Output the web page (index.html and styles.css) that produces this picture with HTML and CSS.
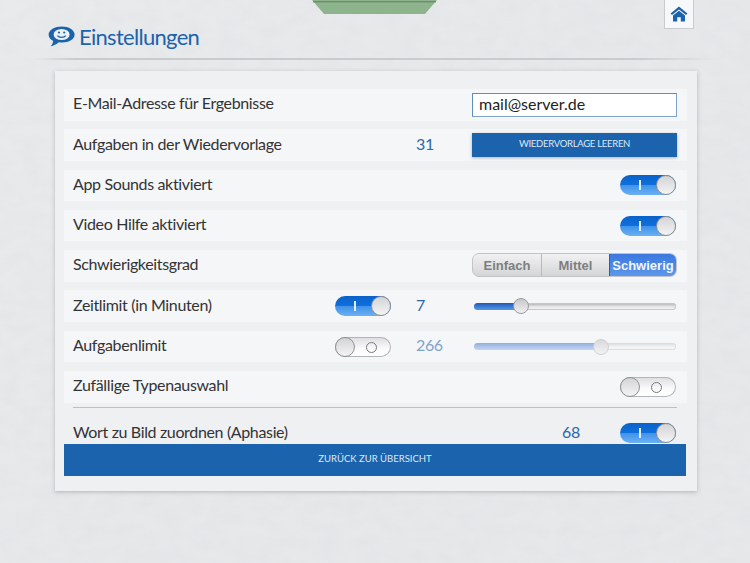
FILE: index.html
```html
<!DOCTYPE html>
<html lang="de">
<head>
<meta charset="utf-8">
<title>Einstellungen</title>
<link rel="stylesheet" href="styles.css">
</head>
<body>
<div class="page">
  <svg class="texture" width="750" height="563" aria-hidden="true">
    <filter id="paper"><feTurbulence type="fractalNoise" baseFrequency="0.05 0.08" numOctaves="3" seed="4"/><feColorMatrix type="matrix" values="0 0 0 0 0.6  0 0 0 0 0.62  0 0 0 0 0.65  0 0 0 0.22 -0.07"/></filter>
    <rect width="750" height="563" filter="url(#paper)"/>
  </svg>
  <svg class="tab" width="128" height="15" viewBox="0 0 128 15"><polygon points="1,0 126,0 114,14 13,14" fill="#8db48d"/><rect x="2" y="1" width="123" height="1.4" fill="#6f8c72"/></svg>
  <a class="home">
    <svg width="18" height="16" viewBox="0 0 18 16"><path d="M9 0.5 L0.6 7.4 L2 9 L9 3.4 L16 9 L17.4 7.4 Z" fill="#1b63ad"/><path d="M9 4.8 L3 9.6 V15.6 H7.2 V11.2 H10.8 V15.6 H15 V9.6 Z" fill="#1b63ad"/></svg>
  </a>
  <header class="header">
    <svg class="logo" width="27" height="21" viewBox="0 0 27 21">
      <path d="M13.8 0.4 C20.8 0.4 26.6 3.8 26.6 8.6 C26.6 13.4 20.8 16.6 14.4 16.6 C13.2 16.6 12 16.5 10.8 16.2 C8.6 18.2 5.6 19.8 2.6 20.2 C4.2 18.6 5 16.8 5.2 15 C2.4 13.6 0.6 11.3 0.6 8.6 C0.6 3.8 6.8 0.4 13.8 0.4 Z" fill="#1b63ad"/>
      <ellipse cx="13.6" cy="8.5" rx="8" ry="5.5" fill="#eaf1f8"/>
      <circle cx="11" cy="6.5" r="1.1" fill="#1b63ad"/><circle cx="16.2" cy="6.5" r="1.1" fill="#1b63ad"/>
      <path d="M9.4 9.6 C11 11.9 16.2 11.9 17.8 9.6" fill="none" stroke="#1b63ad" stroke-width="1.1"/>
    </svg>
    <h1 class="title">Einstellungen</h1>
  </header>
  <main class="card">
    <div class="scroller">
      <div class="row">
        <span class="label">E-Mail-Adresse für Ergebnisse</span>
        <input class="email" type="text" value="mail@server.de">
      </div>
      <div class="row">
        <span class="label">Aufgaben in der Wiedervorlage</span>
        <span class="value">31</span>
        <button class="clear">WIEDERVORLAGE LEEREN</button>
      </div>
      <div class="row">
        <span class="label">App Sounds aktiviert</span>
        <span class="toggle on end"><i class="mark"></i><i class="knob"></i></span>
      </div>
      <div class="row">
        <span class="label">Video Hilfe aktiviert</span>
        <span class="toggle on end"><i class="mark"></i><i class="knob"></i></span>
      </div>
      <div class="row">
        <span class="label">Schwierigkeitsgrad</span>
        <div class="segments">
          <span class="seg first">Einfach</span>
          <span class="seg">Mittel</span>
          <span class="seg active">Schwierig</span>
        </div>
      </div>
      <div class="row">
        <span class="label">Zeitlimit (in Minuten)</span>
        <span class="toggle on mid"><i class="mark"></i><i class="knob"></i></span>
        <span class="value">7</span>
        <div class="slider"><div class="fill fill-time"></div><i class="thumb"></i><div class="rest"></div></div>
      </div>
      <div class="row">
        <span class="label">Aufgabenlimit</span>
        <span class="toggle off mid"><i class="knob"></i><i class="ring"></i></span>
        <span class="value dim">266</span>
        <div class="slider dim-slider"><div class="fill fill-tasks"></div><i class="thumb"></i><div class="rest"></div></div>
      </div>
      <div class="row">
        <span class="label">Zufällige Typenauswahl</span>
        <span class="toggle off end"><i class="knob"></i><i class="ring"></i></span>
      </div>
      <hr class="divider">
      <div class="type-row">
        <span class="label grow">Wort zu Bild zuordnen (Aphasie)</span>
        <span class="type-value">68</span>
        <span class="toggle on"><i class="mark"></i><i class="knob"></i></span>
      </div>
    </div>
    <button class="back">ZURÜCK ZUR ÜBERSICHT</button>
  </main>
</div>
</body>
</html>
```
FILE: styles.css
```css
* { box-sizing: border-box; }
html, body { margin: 0; padding: 0; }
body { font-family: "Lato", "Liberation Sans", sans-serif; color: #333335; }
.page {
  position: relative;
  width: 750px;
  height: 563px;
  overflow: hidden;
  background: linear-gradient(135deg, #e9eaec 0%, #e6e8ea 50%, #e6e8ea 100%);
}
.texture { position: absolute; left: 0; top: 0; pointer-events: none; }
.tab { position: absolute; left: 311px; top: 0; }
.home {
  position: absolute;
  left: 664px;
  top: -1px;
  width: 30px;
  height: 30px;
  display: flex;
  align-items: center;
  justify-content: center;
  padding-top: 1px;
  background: #f7f8fa;
  border: 1px solid #c9cbce;
  border-top: 0;
}
.header {
  position: relative;
  height: 60px;
  margin: 0 35px -1px;
  padding: 26px 0 0 13px;
  display: flex;
  align-items: flex-start;
  gap: 4px;
  border-bottom: 2px solid transparent;
  border-image: linear-gradient(90deg, rgba(190,192,196,0), #c9cbce 6%, #c9cbce 88%, rgba(190,192,196,0)) 1;
}
.logo { display: block; }
.title {
  margin: -4px 0 0;
  font-size: 22px;
  line-height: 30px;
  font-weight: 400;
  letter-spacing: -0.7px;
  color: #1b63ad;
}
.card {
  position: relative;
  width: 642px;
  height: 420px;
  margin: 12px 0 0 55px;
  padding: 18px 10px 15px 9px;
  background: #eff0f2;
  box-shadow: 0 1px 4px rgba(120, 122, 126, .45);
}
.scroller { height: 355px; overflow: hidden; }
.row {
  height: 31.5px;
  margin-bottom: 8.8px;
  padding: 0 10px 0 9px;
  display: grid;
  grid-template-columns: 262px 81px 56px 205px;
  align-items: center;
  background: #f5f6f8;
}
.row > .label { grid-column: 1; }
.label { font-size: 16px; letter-spacing: -0.35px; white-space: nowrap; padding-bottom: 4px; }
.row > .value { grid-column: 3; }
.row > .email, .row > .clear, .row > .segments, .row > .slider, .row > .end { grid-column: 4; }
.row > .mid { grid-column: 2; }
.end { justify-self: end; margin-right: 1px; }
.value, .type-value { font-size: 16px; letter-spacing: -0.4px; color: #2a68a8; padding-bottom: 4px; }
.value.dim { color: #7fa3cc; }
.email {
  width: 205px;
  height: 24px;
  padding: 0 6px 3px;
  border: 1px solid #7fa3cc;
  border-top-color: #5f8dbf;
  border-left-color: #5f8dbf;
  background: #fff;
  font: 16px "Lato", "Liberation Sans", sans-serif;
  color: #222;
  outline: 0;
}
.clear {
  width: 205px;
  height: 24px;
  padding: 0 0 3px;
  border: 0;
  background: #1b63ad;
  color: #dfe9f4;
  font: 9.5px "Lato", "Liberation Sans", sans-serif;
  letter-spacing: -0.28px;
  box-shadow: 0 1px 3px rgba(60, 80, 110, .4);
}
.toggle {
  position: relative;
  display: block;
  width: 56px;
  height: 20px;
  border-radius: 10px;
  flex: none;
}
.toggle.on { background: linear-gradient(#0a62c8 0%, #0f6fdc 48%, #3f93ea 52%, #6cb0f2 100%); }
.toggle.off { background: linear-gradient(#dcdde0, #fbfbfc 60%, #fff); box-shadow: inset 0 0 0 1px #b4b5b8; }
.knob {
  position: absolute;
  top: 0;
  width: 20px;
  height: 20px;
  border-radius: 50%;
  border: 1px solid #8f9193;
  background: linear-gradient(#d4d4d6, #f4f4f5);
}
.on .knob { right: 0; }
.off .knob { left: 0; }
.mark { position: absolute; left: 19px; top: 5px; width: 2px; height: 10px; background: #e4effb; }
.ring { position: absolute; left: 31px; top: 5px; width: 11px; height: 11px; border-radius: 50%; border: 1.5px solid #77787a; }
.segments {
  display: flex;
  width: 205px;
  height: 24px;
  margin-top: -1px;
  border: 1px solid #c3c4c7;
  border-radius: 7px;
  overflow: hidden;
  background: linear-gradient(#f1f1f2, #d4d5d7);
}
.seg {
  flex: 0 0 68px;
  display: flex;
  align-items: center;
  justify-content: center;
  border-left: 1px solid #b8b9bc;
  font: bold 13px "Liberation Sans", sans-serif;
  color: #7d7e80;
}
.seg.first { border-left: 0; }
.seg.active {
  flex: 1;
  border-left-color: #2b5fa8;
  background: linear-gradient(#3c78de, #5c97ec);
  color: #f2f6fd;
}
.slider {
  position: relative;
  width: 202px;
  height: 7px;
  margin-left: 2px;
  display: flex;
  align-items: stretch;
}
.fill { border-radius: 4px 0 0 4px; background: linear-gradient(#2258ad, #3c7fd8 55%, #5a96e0); }
.fill-time { width: 47px; }
.fill-tasks { width: 127px; }
.rest { flex: 1; border-radius: 0 4px 4px 0; background: linear-gradient(#a9aaac, #e4e4e6 50%, #f8f8f9); box-shadow: inset 0 0 0 1px #c6c7c9; }
.thumb {
  align-self: center;
  flex: none;
  width: 16px;
  height: 16px;
  margin: 0 -8px;
  z-index: 1;
  border-radius: 50%;
  border: 1px solid #9a9b9d;
  background: linear-gradient(#c8c8ca, #f0f0f1);
}
.dim-slider .fill { background: linear-gradient(#8faedb, #aec6e9 55%, #c2d5ef); }
.dim-slider .rest { background: linear-gradient(#d8d9db, #f1f1f2 50%, #fafafb); box-shadow: inset 0 0 0 1px #dcdde0; }
.dim-slider .thumb { background: linear-gradient(#dadadc, #f3f3f4); border-color: #cfd0d2; }
.divider {
  height: 1px;
  margin: -4px 10px 0 9px;
  border: 0;
  background: #bfc0c3;
}
.type-row {
  height: 32px;
  margin-top: 9px;
  padding: 0 11px 0 9px;
  display: flex;
  align-items: center;
}
.grow { flex: 1; }
.type-value { width: 58px; }
.back {
  display: block;
  width: 622px;
  height: 32px;
  padding: 0 0 3px;
  border: 0;
  background: #1b63ad;
  color: #dfe9f4;
  font: 9.5px "Lato", "Liberation Sans", sans-serif;
}
```
